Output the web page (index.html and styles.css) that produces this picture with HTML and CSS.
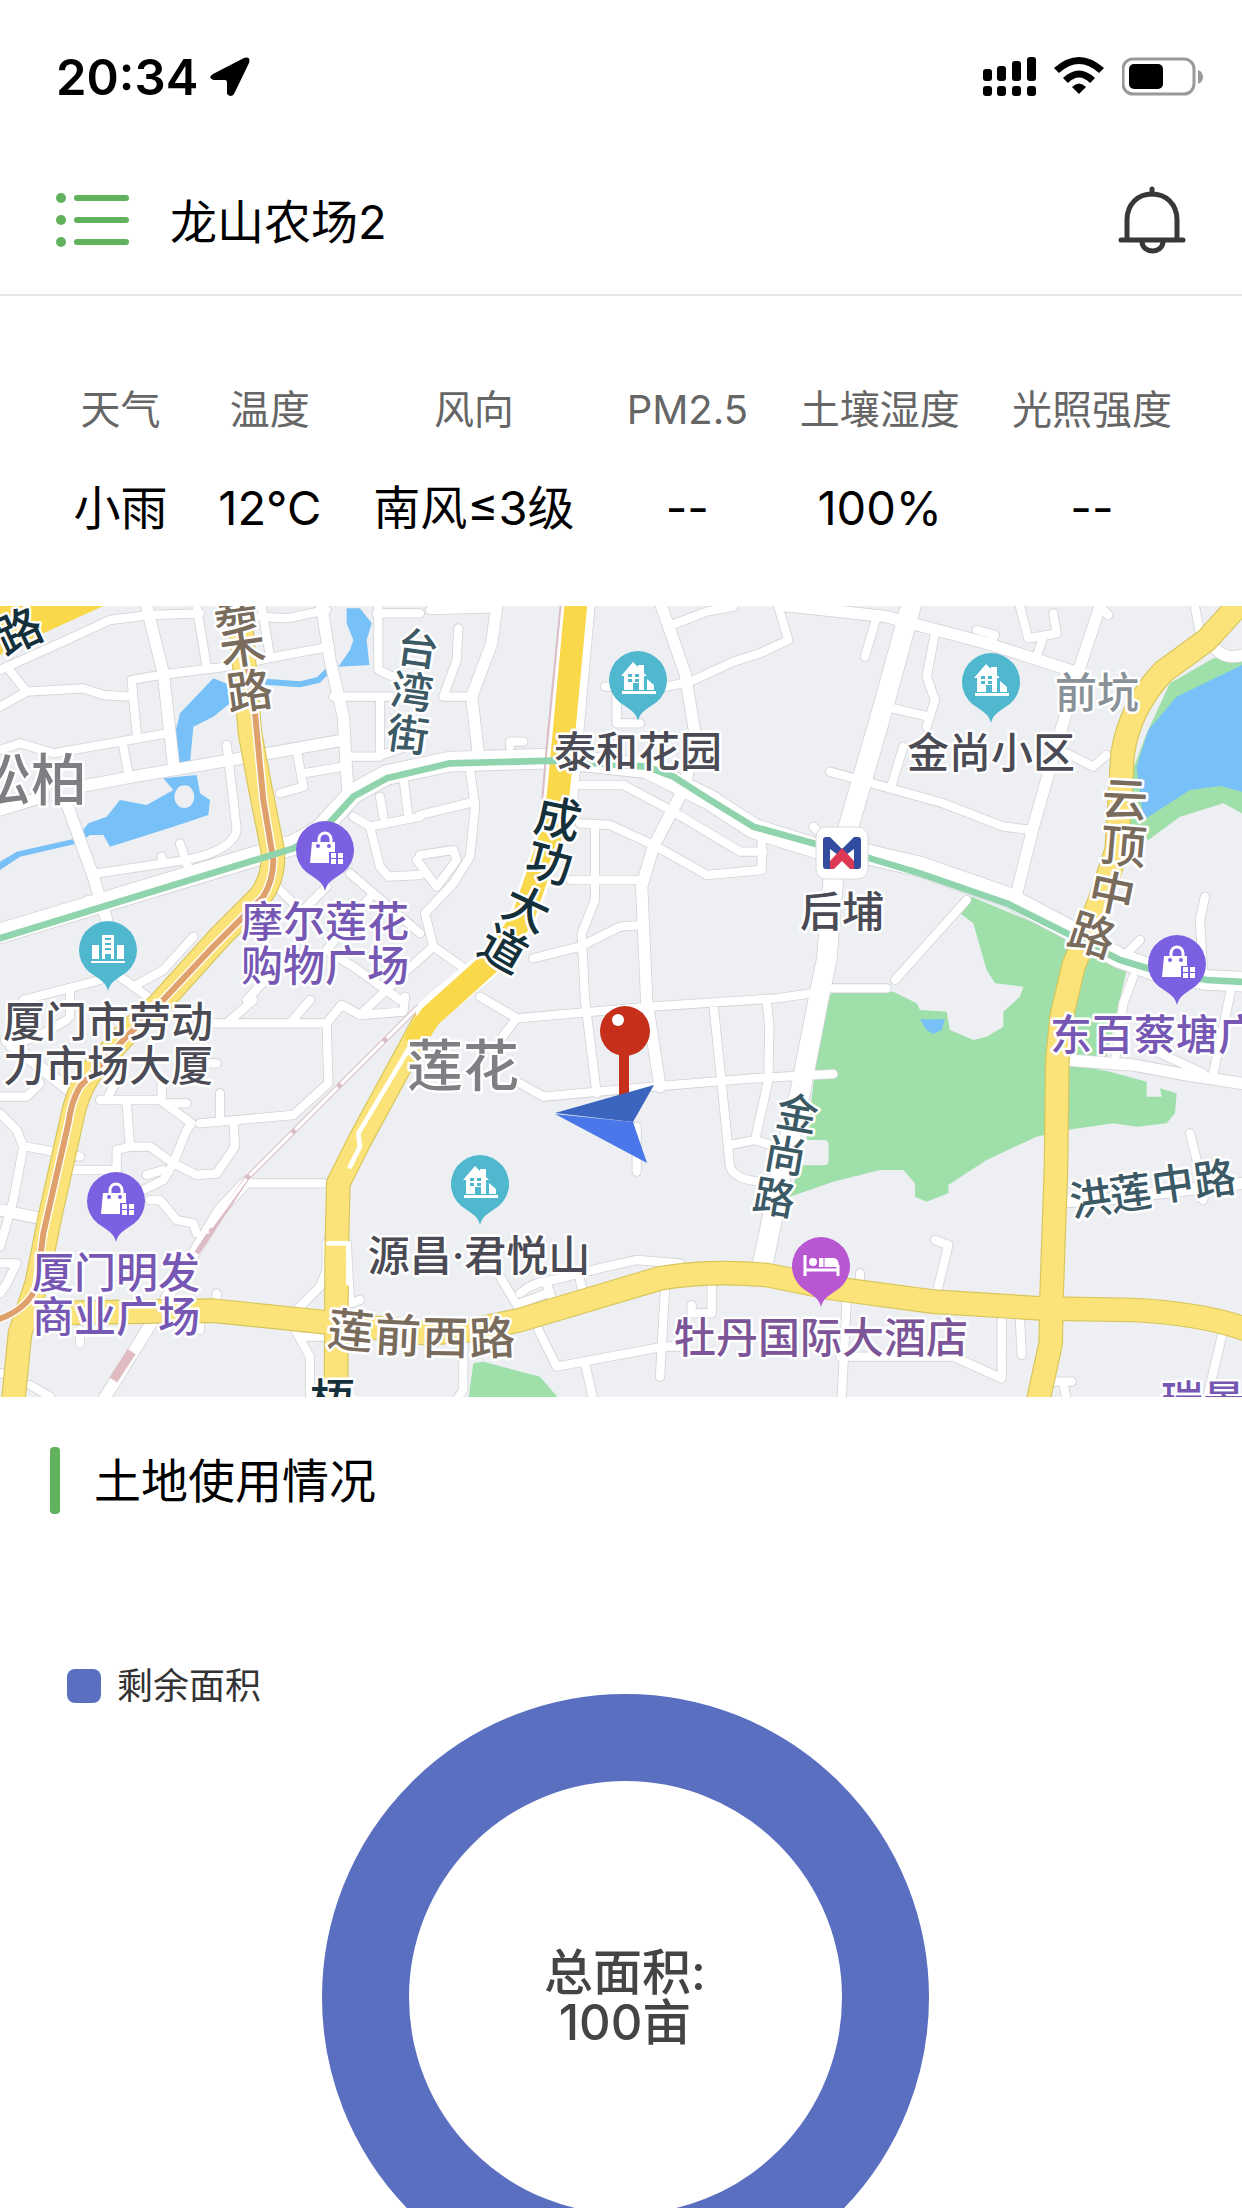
FILE: index.html
```html
<!DOCTYPE html>
<html lang="zh-CN">
<head>
    <meta charset="UTF-8">
    <meta name="viewport" content="width=device-width, initial-scale=1.0">
    <title>龙山农场2</title>
    <link rel="stylesheet" href="styles.css">
</head>
<body>
    <div class="status-bar">
        <div class="status-left">
            <span>20:34</span>
            <svg width="40" height="40" viewBox="0 0 40 40" aria-hidden="true">
                <path d="M3 17 L34 1 Q41 -1 39 6 L24 37 Q21 41 17 37 V25 Q17 23 15 23 H4 Q-3 21 3 17Z"/>
            </svg>
        </div>
        <div class="status-right">
            <svg width="53" height="40" viewBox="0 0 53 40" aria-hidden="true">
                <rect x="0" y="12" width="9" height="12" rx="3"/>
                <rect x="14" y="9" width="9" height="15" rx="3"/>
                <rect x="29" y="4" width="9" height="20" rx="3"/>
                <rect x="44" y="0" width="9" height="24" rx="3"/>
                <rect x="0" y="29" width="9" height="10" rx="3"/>
                <rect x="14" y="29" width="9" height="10" rx="3"/>
                <rect x="29" y="29" width="9" height="10" rx="3"/>
                <rect x="44" y="29" width="9" height="10" rx="3"/>
            </svg>
            <svg width="50" height="40" viewBox="0 0 50 40" aria-hidden="true">
                <path d="M0 11 Q25 -11 50 11 L45 16 Q25 -2 5 16Z"/>
                <path d="M9 21 Q25 6 41 21 L36 26 Q25 15 14 26Z"/>
                <path d="M18 30 Q25 23 32 30 L25 37Z"/>
            </svg>
            <svg width="82" height="40" viewBox="0 0 82 40" aria-hidden="true">
                <rect x="1" y="2" width="71" height="35" rx="10" fill="none" stroke="#999" stroke-width="3"/>
                <rect x="7" y="7" width="34" height="25" rx="5"/>
                <path d="M76 13 Q81 15 81 20 Q81 25 76 27Z" fill="#999"/>
            </svg>
        </div>
    </div>

    <header class="header">
        <button type="button" class="icon-btn" aria-label="菜单">
            <svg width="74" height="56" viewBox="0 0 74 56" fill="#62b15c">
                <circle cx="5" cy="6" r="5"/>
                <circle cx="5" cy="28" r="5"/>
                <circle cx="5" cy="50" r="5"/>
                <path d="M21 6 H70 M21 28 H70 M21 50 H70" stroke="#62b15c" stroke-width="6" stroke-linecap="round"/>
            </svg>
        </button>
        <h1>龙山农场2</h1>
        <button type="button" class="icon-btn" aria-label="通知">
            <svg width="68" height="68" viewBox="0 0 68 68" fill="none" stroke="#383838" stroke-width="5" stroke-linecap="round">
                <path d="M34 3 V8"/>
                <path d="M9 53 V34 C9 18 20 8 34 8 C48 8 59 18 59 34 V53"/>
                <path d="M3 54 H65"/>
                <path d="M24 56 C25 68 44 68 45 56"/>
            </svg>
        </button>
    </header>

    <main class="content">
        <section class="weather">
            <table>
                <thead>
                    <tr>
                        <th scope="col">天气</th>
                        <th scope="col">温度</th>
                        <th scope="col">风向</th>
                        <th scope="col">PM2.5</th>
                        <th scope="col">土壤湿度</th>
                        <th scope="col">光照强度</th>
                    </tr>
                </thead>
                <tbody>
                    <tr>
                        <td>小雨</td>
                        <td>12°C</td>
                        <td>南风≤3级</td>
                        <td>--</td>
                        <td>100%</td>
                        <td>--</td>
                    </tr>
                </tbody>
            </table>
        </section>

        <svg class="map" viewBox="0 6 1242 791" role="img" aria-label="地图">
            <defs>
                <g id="streets-small">
                    <path d="M0 210 L200 120 L330 60 L450 45 L600 40 M780 50 L860 55 L980 30 M590 20 L620 200 M0 320 L80 275 L250 265 L310 285 L390 290 M20 200 L80 275 M410 400 L395 240 L480 225 L680 200 L830 170 L990 140 M785 20 L810 170"/>
                    <path d="M1135 20 V210 L1200 240 M1000 290 H1230 M1140 290 V470 M1130 40 H1260 M0 450 L60 430 L160 460 L500 400 M370 440 L385 520 M680 435 L700 600 L710 690 Q700 750 560 780 L290 820 M540 730 L570 820 M485 770 L490 790 M265 900 V930"/>
                    <path d="M890 450 L910 560 L840 580 M910 520 L1030 500 M1045 470 H1130 L1250 430 M1060 650 L1110 680 L1140 800 L1165 830 L1260 825 M1110 680 L1260 650 M1140 590 L1150 650 M1210 530 L1225 650 M1050 820 L1120 880 L980 1050 L1060 1100 L1200 1200 M830 860 L900 930 M980 860 L890 950 M1120 880 L1260 1000"/>
                    <path d="M70 1200 L300 1140 M210 1170 V1250 M360 1130 L470 1210 M400 1160 L490 1110 L580 1010 M740 1200 L870 1060 L930 1100"/>
                    <path d="M1290 30 L1490 25 M1375 85 L1370 180 L1330 290 H1415 M1410 510 L1425 620 L1410 770 L1360 850 L1275 940 L1300 1040 L1400 1110 M1260 645 L1425 605 M1260 765 L1360 750 L1370 780 L1310 860 L1250 780 M1300 1040 L1200 1130 L1080 1245 M1530 440 V425 H1570"/>
                    <path d="M2015 75 L2120 35 L2200 20 M2335 20 L2365 120 L2280 160 L2200 185 L2070 245 L2000 260 M1815 260 H1850 V370 H1920 M1740 555 H1870 L2020 635 L2220 755 H2290 M2285 700 V810 L2120 825 L2060 790 L1960 735 L1830 675 L1740 670 M1785 680 V900 L1745 1000 L1755 1200 L1790 1480 M1710 840 H1920 M1600 1075 L1740 1040 L1860 980 L1930 975 M2440 680 L2470 710"/>
                    <path d="M1440 1190 L1550 1255 L1950 1220 L2330 1195 L2470 1175 M1550 1255 L1500 1320 M1560 1450 L1630 1490 L1960 1460 L2260 1435 L2500 1422 M2140 1210 L2170 1500 L2190 1700 Q2205 1742 2290 1745 M2300 1200 L2308 1280 L2305 1440 L2265 1620 L2190 1635 M2265 1620 L2330 1640 M1910 1580 V1715"/>
                    <path d="M2490 515 L2610 548 L2830 610 L3010 680 L3100 690 M2680 325 L2785 350 M2805 100 L2780 230 L2805 300 L2780 380 M2710 440 L2675 555 M2595 170 L2630 50 M3060 20 L3085 115 L3170 100 L3160 40 M3110 170 L3130 110 M2930 90 L2985 105 L2970 130 M3200 460 L3280 500 L3320 465 M3585 20 L3600 100 M3300 20 L3325 45"/>
                    <path d="M2900 900 L2685 1140 M2500 1165 H2660 M3420 1020 L3380 1060 M3615 890 L3600 960 L3610 1130 M3400 1130 L3370 1210 L3345 1380 M3695 1160 L3640 1420 M3480 1360 L3610 1420 M3570 1600 L3590 1680 M3610 1800 V1740 M2805 1920 L2845 1935 L2810 2080 M2580 2020 V2060"/>
                    <path d="M2540 2100 L2525 2400 M2520 2270 H2860 L3005 2335 V2160 M3060 2160 L3065 2265 M3670 2190 L3620 2400 M3165 2345 H3215 M3190 2350 L3200 2400 M1500 2030 L1560 2130 M1560 2080 Q1600 2045 1660 2040 L1820 2000 L1910 1980 L2040 1990 M1640 2050 L1660 2110 M1560 2110 L1640 2080 M1735 2020 L1750 2080 M1615 2190 L1670 2300 L1990 2240 H2040 M1755 2290 L1780 2400 M1995 2070 L1980 2330 M2135 2050 V2140 M2075 2115 V2140 H2135 M1390 2220 V2370 L1370 2400"/>
                    <path d="M640 1270 H980 L1025 1215 L1080 1245 L1210 1235 L1215 1190 M980 1270 L985 1450 L880 1545 L600 1570 M680 1270 L760 1200 M870 1270 L930 1200 M660 1480 V1560 M700 1560 L705 1640 L650 1720 L590 1725 L520 1690 L560 1590 L575 1570 L480 1500 H300 M500 1510 H560 M380 1510 L390 1640 L350 1650 V1710 H210 M390 1640 H450 L520 1690 L490 1740 L430 1770 M440 1725 L490 1710 M450 1800 H480 L530 1860 L580 1870 L590 1900"/>
                    <path d="M0 1490 H80 L120 1450 M0 1540 L50 1590 L70 1640 L40 1800 L0 1940 M80 1640 L240 1670 M0 1990 L50 1990 L20 2050 L0 2080 M485 1440 V1500 M320 1500 L350 1440 M650 1390 H540 M30 1340 L130 1300 L200 1260 M730 1750 H970 M650 2080 V2120 M240 2190 V2230 M600 2140 V2190 M980 1930 V2010 L960 2060 L890 2130 M980 1930 H1040 L1050 2110 L1080 2100 M880 2180 L930 2270 V2400 M900 2210 H980 M0 2320 H30 M90 2355 L150 2390"/>
                </g>
                <g id="streets-wide">
                    <path d="M440 20 L490 220 L520 490 M965 20 L990 180 L1030 350 L1045 600 M0 630 L130 590 M240 560 L400 530 L750 470 L1030 420 M200 610 L280 830 L320 960 M1490 20 L1475 130 L1415 290 L1435 460 M1985 20 L2055 220 L2085 400 L2055 560 L1960 740 L1925 860 L1940 1200 L1980 1460 M2340 15 L2660 50 L2960 130 L3240 220 M3300 20 L3240 200 L3180 400 L3100 680 L3050 880 M3200 1380 L3400 1395 L3560 1425 L3726 1450 M3190 1805 L3300 1800 L3726 1750 M3650 150 Q3680 180 3730 165 M20 1320 L220 1480 M0 1830 L120 1855 M740 1745 L660 1830 L600 1930 L460 2160 L310 2400"/>
                </g>
                <g id="streets-major">
                    <path d="M2735 10 L2650 320 L2540 700 L2500 840 L2480 1080 L2455 1200 L2400 1480 L2340 1740 L2285 2010 M1755 10 L1720 400 L1700 620"/>
                    <path d="M0 1000 L880 735 L960 690 L1060 580 L1160 525 L1350 485 L1660 475 L1940 505 L2130 600 L2260 685 L2450 745 L2610 765 L2760 800 L3020 890 L3200 985 L3360 1075 L3460 1110 L3620 1140 L3730 1145"/>
                </g>
                <g id="main-roads">
                    <path d="M725 100 L750 400 L780 560 L818 750 Q825 830 780 890 L660 1010 L480 1210 L370 1310 L270 1420 Q230 1480 215 1560 L150 1850 L110 2050 L60 2200 L40 2400"/>
                    <path d="M90 2140 L640 2132 L960 2165 L1280 2200 L1420 2190 L1560 2160 L1980 2035 Q2130 2010 2300 2025 L2500 2065 L2800 2105 L3120 2125 L3400 2130 Q3600 2140 3730 2185"/>
                    <path d="M3720 10 L3620 120 L3490 215 Q3390 320 3368 460 L3350 750 L3300 900 L3220 1100 L3185 1250 L3172 1380 L3168 1700 L3155 2080 L3152 2230 L3115 2400"/>
                    <path d="M1270 1270 L1080 1620 L1015 1750 L1010 1960 L1008 2400"/>
                </g>

                <g id="pin">
                    <path d="M0 42 C-2 34 -7 31 -13 27 A29 29 0 1 1 13 27 C7 31 2 34 0 42Z"/>
                </g>
                <g id="icon-house" fill="#fff">
                    <path d="M-17 -3 L-5 -17 L0 -12 V-14 H6 V-6 L9 -3 H6 V11 H1 V4 H-5 V11 H-14 V-3Z"/>
                    <path d="M9 0 L16 6 V11 H9Z M-16 12 H18 V15 H-16Z"/>
                    <path d="M-10 -5 H-6 V-2 H-10Z M-3 -5 H1 V-2 H-3Z M-10 0 H-6 V3 H-10Z M-3 0 H1 V3 H-3Z" fill="#4fb8cf"/>
                </g>
                <g id="icon-mall">
                    <path d="M-6 -7 V-10 A5 5 0 0 1 6 -10 V-7" fill="none" stroke="#fff" stroke-width="3"/>
                    <path d="M-13 -7 H10 V3 H4 V14 H-15Z M6 4 H11 V9 H6Z M13 4 H18 V9 H13Z M6 10 H11 V15 H6Z M13 10 H18 V15 H13Z" fill="#fff"/>
                    <circle cx="-7" cy="-3" r="2" fill="#7c60e2"/>
                    <circle cx="4" cy="-3" r="2" fill="#7c60e2"/>
                </g>
            </defs>

            <!-- geometry is drawn on a grid three times finer than the labels -->
            <g transform="scale(0.33333)">
                <rect class="land" x="0" y="0" width="3730" height="2400"/>

                <g class="park">
                    <path d="M2915 890 L3200 1010 L3380 1110 L3320 1370 L3200 1390 L3330 1415 L3440 1445 V1490 H3485 L3480 1465 L3530 1480 L3525 1540 L3500 1570 L3410 1580 L3340 1570 L3200 1590 L3110 1610 L2960 1680 L2845 1755 V1780 L2780 1805 L2745 1790 V1750 L2710 1710 H2640 L2500 1745 L2370 1790 L2420 1620 L2470 1200 L2500 1175 H2680 L2750 1210 L2760 1230 L2840 1235 L2850 1290 L2920 1320 L2960 1310 L3010 1280 V1235 L3060 1190 L3070 1160 L2985 1150 L2960 1110 L2920 970 L2880 940Z"/>
                    <path d="M3726 170 L3640 175 L3510 250 L3440 400 L3380 560 L3390 690 L3445 720 L3540 650 L3670 610 L3726 640Z"/>
                    <path d="M1405 2400 L1420 2290 L1450 2285 L1620 2330 L1680 2400Z"/>
                </g>
                <rect class="land" x="2400" y="1620" width="86" height="76" rx="14"/>

                <g class="water">
                    <path d="M3726 195 L3530 290 L3445 390 L3410 500 L3430 660 L3570 570 L3660 558 L3726 575Z"/>
                    <path d="M640 235 L690 255 V310 L640 350 L580 380 L570 490 H535 L525 400 L540 340Z"/>
                    <path d="M490 535 L590 525 L600 580 L630 600 L625 645 L520 680 L330 740 L310 705 H270 L235 730 L60 770 L0 810 V785 L50 755 L230 715 L265 670 L320 650 L360 600 L440 615 L520 570Z"/>
                    <path d="M1040 25 H1080 L1115 70 L1100 120 L1108 195 L1015 200 L1050 150 L1060 120 L1040 70Z"/>
                    <path d="M2760 1258 H2835 L2825 1290 L2800 1302 L2780 1290Z"/>
                </g>
                <path class="stream" d="M795 245 L900 253 L955 240 L985 210"/>
                <ellipse class="land" cx="553" cy="590" rx="30" ry="34"/>

                <use href="#streets-small" class="casing small"/>
                <use href="#streets-wide" class="casing wide"/>
                <use href="#streets-major" class="casing major"/>
                <use href="#streets-small" class="fill small"/>
                <use href="#streets-wide" class="fill wide"/>
                <use href="#streets-major" class="fill major"/>

                <path class="railway thin" d="M1682 18 L1640 440 L1612 780 L1560 950 L1450 1080"/>
                <path class="railway" d="M1450 1080 L1250 1225 L1030 1445 L740 1735 L590 1960"/>
                <path class="railway-gap" d="M1450 1080 L1250 1225 L1030 1445 L740 1735 L620 1900"/>
                <path class="railway-block" d="M395 2255 L340 2340"/>

                <use href="#main-roads" class="main-edge"/>
                <use href="#main-roads" class="main-fill"/>
                <path class="slip-road" d="M1230 1340 L1075 1600 L1080 1640 L1050 1700"/>
                <path class="slip-road" d="M985 1930 H1045 V2050"/>

                <path class="express-edge" d="M1728 10 L1675 580 L1655 700 L1570 950 L1490 1070 L1290 1235"/>
                <path class="express" d="M1728 10 L1675 580 L1655 700 L1570 950 L1490 1070 L1290 1250 L1250 1310"/>
                <path class="express-area" d="M0 18 H310 L140 95 L0 165Z"/>

                <path class="metro-edge" d="M735 180 L765 340 L790 600 L820 780 Q820 840 790 890 L640 1040 L480 1210 L370 1320 L240 1460 Q215 1500 205 1570 L130 1900 L110 2060 Q80 2130 -10 2160"/>
                <path class="metro-orange" d="M735 180 L765 340 L790 600 L820 780 Q820 840 790 890 L640 1040 L480 1210 L370 1320 L240 1460 Q215 1500 205 1570 L130 1900 L110 2060 Q80 2130 -10 2160"/>
                <path class="metro-green" d="M0 1015 L880 745 L960 700 L1060 590 L1160 535 L1350 490 L1660 482 L1940 500 L2020 530 L2130 600 L2260 680 L2450 733 L2610 775 L2760 820 L3020 910 L3200 1000 L3360 1080 L3460 1110 L3620 1140 L3730 1146"/>
            </g>

            <g class="label area">
                <text x="87" y="200" text-anchor="end">松柏</text>
                <text x="463" y="486">莲花</text>
                <text x="1097" y="108" class="small-area">前坑</text>
            </g>
            <g class="label road-dark">
                <text x="28" y="56" rotate="-25">路</text>
                <text x="555 546 522 498" y="230 273 314 352" rotate="12 15 25 30">成功大道</text>
                <text x="333" y="817">梧</text>
            </g>
            <g class="label road-brown">
                <text x="237 245 252" y="25 66 111" rotate="-8">嘉禾路</text>
                <text x="1124 1122 1109 1088" y="215 261 305 344" rotate="3 5 12 18">云顶中路</text>
                <text x="349 397 445 493" y="745 751 754 756" rotate="6 3 1 -3">莲前西路</text>
            </g>
            <g class="label road-slate">
                <text x="416 410 406" y="61 104 147" rotate="8">台湾街</text>
                <text x="795 783 772" y="525 567 609" rotate="10">金尚路</text>
                <text x="1093 1133 1175 1217" y="617 611 602 597" rotate="-8">洪莲中路</text>
            </g>
            <g class="label poi">
                <text x="638" y="167">泰和花园</text>
                <text x="991" y="168">金尚小区</text>
                <text x="842" y="327">后埔</text>
                <text x="108" y="437">厦门市劳动</text>
                <text x="108" y="481">力市场大厦</text>
                <text x="479" y="671">源昌·君悦山</text>
            </g>
            <g class="label mall">
                <text x="325" y="337">摩尔莲花</text>
                <text x="325" y="381">购物广场</text>
                <text x="116" y="688">厦门明发</text>
                <text x="116" y="732">商业广场</text>
                <text x="1050" y="450" text-anchor="start">东百蔡塘广场</text>
                <text x="1161" y="816" text-anchor="start">瑞景</text>
                <text x="821" y="753" class="hotel">牡丹国际大酒店</text>
            </g>

            <g transform="translate(638 79)"><use href="#pin" class="pin-home"/><use href="#icon-house"/></g>
            <g transform="translate(991 81)"><use href="#pin" class="pin-home"/><use href="#icon-house"/></g>
            <g transform="translate(480 583)"><use href="#pin" class="pin-home"/><use href="#icon-house"/></g>
            <g transform="translate(108 349)">
                <use href="#pin" class="pin-home"/>
                <path d="M-16 -4 H-9 V10 H-16Z M9 -4 H16 V10 H9Z M-17 12 H17 V14 H-17Z M-6 -14 H6 V10 H3 V5 H-3 V10 H-6Z" fill="#fff"/>
                <path d="M-3 -10 H3 M-3 -5 H3 M-3 0 H3" stroke="#4fb8cf" stroke-width="2"/>
            </g>
            <g transform="translate(325 249)"><use href="#pin" class="pin-mall"/><use href="#icon-mall"/></g>
            <g transform="translate(1177 363)"><use href="#pin" class="pin-mall"/><use href="#icon-mall"/></g>
            <g transform="translate(116 600)"><use href="#pin" class="pin-mall"/><use href="#icon-mall"/></g>
            <g transform="translate(821 665)">
                <use href="#pin" class="pin-hotel"/>
                <path d="M-16 -10 V11 M-16 5 H17 M17 0 V11" fill="none" stroke="#fff" stroke-width="3"/>
                <circle cx="-8" cy="-3" r="4" fill="#fff"/>
                <path d="M-2 -7 H12 Q18 -7 18 2 H-2Z" fill="#fff"/>
                <path d="M3 -7 V2" stroke="#b957d2" stroke-width="1"/>
            </g>

            <!-- metro station -->
            <g transform="translate(842 253)">
                <rect x="-26" y="-26" width="52" height="52" rx="10" fill="#fff" stroke="#d8dade"/>
                <path d="M-19 -13 Q-19 -16 -16 -16 H-12 L0 -4 L12 -16 H16 Q19 -16 19 -13 V13 Q19 16 16 16 H12 V-4 L0 5 L-12 -4 V16 H-16 Q-19 16 -19 13Z" fill="#324c9f"/>
                <path d="M-12 8 L0 -5 L12 8 V16 H8 L0 8 L-8 16 H-12Z" fill="#dc3854"/>
            </g>

            <!-- farm marker and heading arrow -->
            <path d="M624 440 V496" stroke="#c62f1a" stroke-width="10"/>
            <circle cx="625" cy="431" r="25" fill="#c62f1a"/>
            <circle cx="618" cy="420" r="6" fill="#fff"/>
            <path d="M555 513 L654 485 L633 522Z" fill="#3b64bf"/>
            <path d="M555 514 L633 522 L647 563Z" fill="#4a77ea"/>
        </svg>

        <section class="land-use">
            <h2>土地使用情况</h2>
            <div class="chart">
                <div class="legend"><i class="swatch"></i>剩余面积</div>
                <div class="donut">
                    <p>总面积:<br>100亩</p>
                </div>
            </div>
        </section>
    </main>
</body>
</html>
```
FILE: styles.css
```css
* {
    box-sizing: border-box;
}

body {
    margin: 0;
    height: 100vh;
    display: flex;
    flex-direction: column;
    background-color: #fff;
    color: #000;
    font-family: Inter, "Noto Sans CJK SC", sans-serif;
}

svg {
    display: block;
}

/* status bar */
.status-bar {
    display: flex;
    justify-content: space-between;
    align-items: center;
    flex-shrink: 0;
    height: 154px;
    padding: 0 38px 0 56px;
}

.status-left {
    display: flex;
    align-items: center;
    gap: 12px;
    font-size: 49px;
    font-weight: 600;
}

.status-right {
    display: flex;
    align-items: center;
    gap: 18px;
}

/* header */
.header {
    display: flex;
    align-items: center;
    flex-shrink: 0;
    height: 142px;
    padding: 0 56px 8px;
    border-bottom: 2px solid #e6e6e6;
}

.header h1 {
    flex: 1;
    margin: 0 0 4px 40px;
    font-size: 47px;
    font-weight: 400;
}

.icon-btn {
    padding: 0;
    border: none;
    background: none;
    cursor: pointer;
}

.content {
    flex: 1;
    overflow-y: auto;
    scrollbar-width: none;
}

/* weather */
.weather {
    padding: 86px 44px 68px 48px;
}

.weather table {
    width: 100%;
    border-collapse: collapse;
    text-align: center;
    white-space: nowrap;
}

.weather th,
.weather td {
    padding: 0 24px;
    font-weight: 400;
}

.weather th {
    padding-bottom: 40px;
    font-size: 40px;
    line-height: 56px;
    color: #666;
}

.weather td {
    font-size: 47px;
    line-height: 60px;
}

/* map */
.map {
    width: 100%;
    height: auto;
}

.land {
    fill: #edeff3;
}

.park {
    fill: #9fdfaa;
}

.water {
    fill: #77c1f8;
}

.stream {
    fill: none;
    stroke: #77c1f8;
    stroke-width: 18;
}

.casing,
.fill,
.main-edge,
.main-fill,
.slip-road,
.express,
.express-edge,
.railway,
.railway-gap,
.railway-block,
.metro-edge,
.metro-orange,
.metro-green {
    fill: none;
    stroke-linecap: round;
    stroke-linejoin: round;
}

.casing {
    stroke: #d3d4d8;
}

.fill {
    stroke: #fff;
}

.casing.small {
    stroke-width: 30;
}

.fill.small {
    stroke-width: 25;
}

.casing.wide {
    stroke-width: 39;
}

.fill.wide {
    stroke-width: 34;
}

.casing.major {
    stroke-width: 64;
}

.fill.major {
    stroke-width: 59;
}

.main-edge {
    stroke: #d8c65a;
    stroke-width: 74;
}

.main-fill {
    stroke: #fbe37a;
    stroke-width: 67;
}

.slip-road {
    stroke: #fff;
    stroke-width: 14;
}

.express-edge {
    stroke: #fff;
    stroke-width: 84;
}

.express {
    stroke: #f9d84a;
    stroke-width: 68;
}

.express-area {
    fill: #f9d84a;
}

.railway {
    stroke: #dcbcc4;
    stroke-width: 16;
    stroke-linecap: butt;
}

.railway.thin {
    stroke-width: 6;
}

.railway-gap {
    stroke: #fff;
    stroke-width: 10;
    stroke-dasharray: 180 14;
    stroke-linecap: butt;
}

.railway-block {
    stroke: #e0bcc2;
    stroke-width: 28;
    stroke-linecap: butt;
}

.metro-edge {
    stroke: #fff;
    stroke-width: 26;
}

.metro-orange {
    stroke: #dfa06c;
    stroke-width: 18;
}

.metro-green {
    stroke: #8fd4ac;
    stroke-width: 20;
}

.label {
    font-size: 42px;
    font-weight: 500;
    text-anchor: middle;
    paint-order: stroke;
    stroke: #fff;
    stroke-width: 5px;
    stroke-linejoin: round;
}

.area {
    font-size: 56px;
    fill: #7f7f83;
}

.small-area {
    font-size: 42px;
    fill: #8a9299;
}

.road-dark {
    font-size: 46px;
    fill: #14303a;
}

.road-brown {
    font-size: 46px;
    fill: #7a6c5c;
}

.road-slate {
    font-size: 42px;
    fill: #3c5966;
}

.poi {
    fill: #4a4b54;
}

.mall {
    fill: #7658b4;
}

.hotel {
    fill: #7b5598;
}

.pin-home {
    fill: #4fb8cf;
}

.pin-mall {
    fill: #7c60e2;
}

.pin-hotel {
    fill: #b957d2;
}

/* land use */
.land-use {
    padding: 50px 50px 60px;
}

.land-use h2 {
    margin: 0;
    padding-left: 44px;
    position: relative;
    font-size: 47px;
    font-weight: 400;
    line-height: 67px;
}

.land-use h2::before {
    content: "";
    position: absolute;
    left: 0;
    top: 0;
    width: 10px;
    height: 100%;
    border-radius: 4px;
    background-color: #62b15c;
}

/* legend shares its cell with the donut */
.chart {
    display: grid;
    padding: 150px 0 0 8px;
}

.legend,
.donut {
    grid-area: 1 / 1;
}

.legend {
    display: flex;
    align-items: center;
    align-self: start;
    gap: 16px;
    padding-left: 9px;
    font-size: 36px;
    line-height: 44px;
    color: #333;
}

.swatch {
    width: 34px;
    height: 34px;
    border-radius: 8px;
    background-color: #5a6fc0;
}

.donut {
    display: grid;
    place-items: center;
    justify-self: center;
    width: 607px;
    height: 607px;
    margin-top: 30px;
    border: 87px solid #5a6fc0;
    border-radius: 50%;
}

.donut p {
    margin: 0;
    font-size: 49px;
    font-weight: 500;
    line-height: 50px;
    text-align: center;
    color: #444;
}
```
